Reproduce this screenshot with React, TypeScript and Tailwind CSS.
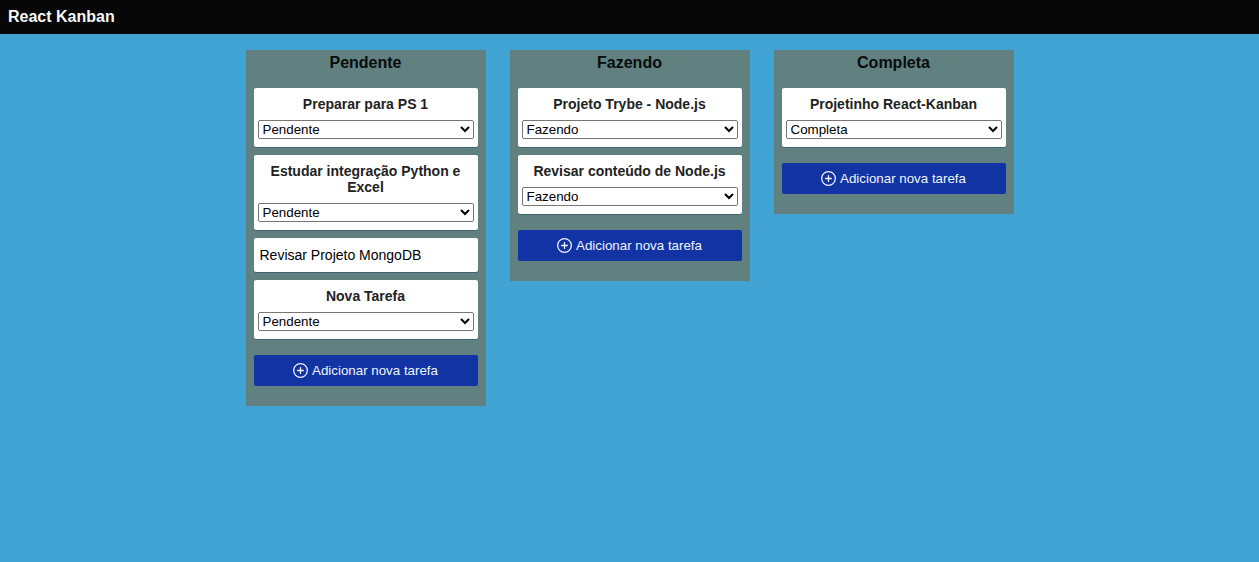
import { useState } from 'react';

type Status = 'Pendente' | 'Fazendo' | 'Completa';

interface Task {
  id: number;
  title: string;
  status: Status;
  editing?: boolean;
}

const STATUSES: Status[] = ['Pendente', 'Fazendo', 'Completa'];

const INITIAL_TASKS: Task[] = [
  { id: 1, title: 'Preparar para PS 1', status: 'Pendente' },
  { id: 2, title: 'Estudar integração Python e Excel', status: 'Pendente' },
  { id: 3, title: 'Revisar Projeto MongoDB', status: 'Pendente', editing: true },
  { id: 4, title: 'Nova Tarefa', status: 'Pendente' },
  { id: 5, title: 'Projeto Trybe - Node.js', status: 'Fazendo' },
  { id: 6, title: 'Revisar conteúdo de Node.js', status: 'Fazendo' },
  { id: 7, title: 'Projetinho React-Kanban', status: 'Completa' },
];

function PlusCircleIcon() {
  return (
    <svg
      className="size-[15px]"
      viewBox="0 0 15 15"
      fill="none"
      stroke="currentColor"
      strokeWidth="1.3"
      strokeLinecap="round"
      aria-hidden="true"
    >
      <circle cx="7.5" cy="7.5" r="6.85" />
      <path d="M7.5 4.6v5.8M4.6 7.5h5.8" />
    </svg>
  );
}

interface TaskCardProps {
  task: Task;
  onChange: (changes: Partial<Task>) => void;
}

function TaskCard({ task, onChange }: TaskCardProps) {
  if (task.editing) {
    return (
      <input
        className="h-[34px] w-full rounded-xs bg-white px-1.5 text-sm text-black shadow-[0_1px_0_rgba(9,45,90,0.35)] outline-none"
        value={task.title}
        onChange={(event) => onChange({ title: event.target.value })}
        onBlur={() => onChange({ editing: false })}
      />
    );
  }
  return (
    <div className="flex flex-col gap-2 rounded-xs bg-white px-1 py-2 shadow-[0_1px_0_rgba(9,45,90,0.35)]">
      <h3
        className="cursor-pointer px-2 text-center text-sm/4 font-bold text-[#222222]"
        onClick={() => onChange({ editing: true })}
      >
        {task.title}
      </h3>
      <select
        className="[all:revert]"
        value={task.status}
        onChange={(event) => onChange({ status: event.target.value as Status })}
      >
        {STATUSES.map((status) => (
          <option key={status}>{status}</option>
        ))}
      </select>
    </div>
  );
}

export default function App() {
  const [tasks, setTasks] = useState<Task[]>(INITIAL_TASKS);

  const updateTask = (id: number, changes: Partial<Task>) =>
    setTasks((all) => all.map((task) => (task.id === id ? { ...task, ...changes } : task)));

  const addTask = (status: Status) =>
    setTasks((all) => [...all, { id: all.length + 1, title: 'Nova Tarefa', status }]);

  return (
    <div className="min-h-screen bg-[#40a3d3] font-['Liberation_Sans',Arial,sans-serif]">
      <header className="flex h-[34px] items-center bg-[#070707] px-2">
        <h1 className="text-base/[18px] font-bold text-[#f8f8f8]">React Kanban</h1>
      </header>
      <main className="flex items-start justify-center gap-6 pt-4">
        {STATUSES.map((status) => (
          <section key={status} className="w-60 bg-[#618080] px-2 pb-5">
            <h2 className="pt-1 pb-4 text-center text-base/[18px] font-bold text-[#080c0c]">{status}</h2>
            <div className="flex flex-col gap-2">
              {tasks
                .filter((task) => task.status === status)
                .map((task) => (
                  <TaskCard
                    key={task.id}
                    task={task}
                    onChange={(changes) => updateTask(task.id, changes)}
                  />
                ))}
            </div>
            <button
              type="button"
              className="mt-4 flex h-[31px] w-full cursor-pointer items-center justify-center gap-1 rounded-xs bg-[#1233a3] text-[13.333px] text-[#f0f3fb]"
              onClick={() => addTask(status)}
            >
              <PlusCircleIcon />
              Adicionar nova tarefa
            </button>
          </section>
        ))}
      </main>
    </div>
  );
}
